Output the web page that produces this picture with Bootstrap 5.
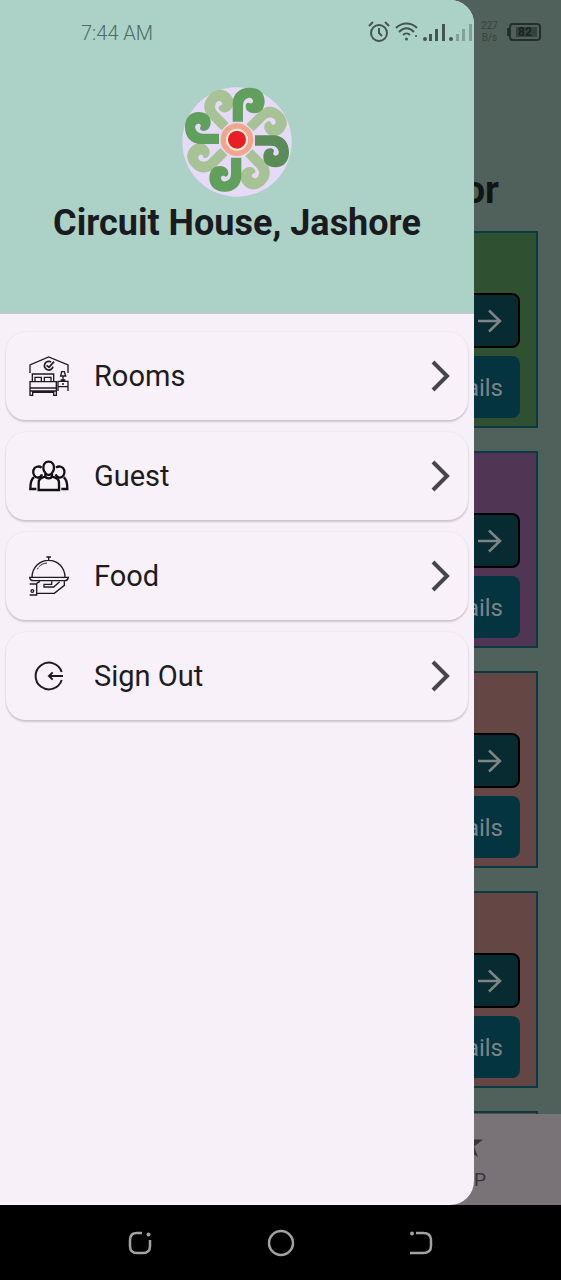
<!DOCTYPE html>
<html lang="en">
<head>
<meta charset="utf-8">
<meta name="viewport" content="width=device-width, initial-scale=1">
<title>Circuit House, Jashore</title>
<link href="https://cdn.jsdelivr.net/npm/bootstrap@5.3.0/dist/css/bootstrap.min.css" rel="stylesheet">
<style>
  body { font-family: Roboto, "Liberation Sans", sans-serif; background: #000; }
  svg { display: block; flex: none; }

  /* page under the open drawer */
  .app-page { background: #4f615a; }
  .floor-title { font-size: 38px; line-height: 44px; padding: 168px 62px 19px; color: #111614; }
  .floor-list { gap: 23px; padding: 0 23px; }
  .floor-box { border: 2px solid #0b3b42; padding: 60px 16px 8px; gap: 8px; flex: none; }
  .floor-green { background: #305032; }
  .floor-purple { background: #503555; }
  .floor-rose { background: #644744; }
  .btn-next { width: 112px; height: 55px; border: 2px solid #000; border-radius: 8px; background: #082b31; padding: 0 15px; }
  .btn-details { width: 112px; height: 62px; border: 0; border-radius: 8px; background: #03343f; color: #7c8388; font-size: 24px; padding: 2px 17px 0; }
  .tab-strip { background: #797276; height: 91px; flex: none; }
  .tab-strip a { width: 33.333%; color: #37343a; font-size: 19px; line-height: 24px; gap: 10px; padding-top: 14px; }

  /* drawer */
  .side-drawer { width: 84.5%; background: #f7f0f9; border-radius: 0 24px 24px 0; z-index: 2; }
  .drawer-head { background: #acd2c8; border-bottom: 1px solid #cac4cc; padding: 87px 16px 67px; }
  .drawer-head h1 { font-size: 36px; line-height: 46px; color: #1a1b20; padding-top: 3px; }
  .menu-list { padding: 18px 6px; gap: 12px; }
  .menu-row { height: 88px; padding: 0 17px 0 23px; gap: 25px; border-radius: 20px; background: #f8f1fa; color: #1d1b20; font-size: 29px; box-shadow: 0 2px 2px rgba(0,0,0,.17), 0 0 2px rgba(0,0,0,.08); }
  .menu-row span { padding-top: 2px; }

  /* system bars */
  .status-strip { height: 62px; padding: 1px 19px 0 81px; z-index: 3; color: rgba(0,0,0,.6); }
  .clock-text { font-size: 20px; color: #4d6c63; padding-top: 3px; }
  .net-speed { font-size: 10px; line-height: 12px; color: #37443f; width: 17px; }
  .key-strip { height: 75px; padding: 0 12.5%; background: #000; flex: none; }
  .key-strip button { flex: 1; }
</style>
</head>
<body>
<div class="vh-100 d-flex flex-column">
  <div class="position-relative flex-grow-1 overflow-hidden d-flex flex-column app-page">

    <main class="flex-grow-1 overflow-hidden d-flex flex-column">
      <h2 class="floor-title fw-bold text-end m-0">Floor</h2>
      <div class="floor-list d-flex flex-column">
        <section class="floor-box floor-green d-flex flex-column align-items-end">
          <button class="btn-next d-flex align-items-center justify-content-end" aria-label="Open"><svg width="26" height="26" viewBox="0 0 26 26" fill="none" stroke="#7d8587" stroke-width="2.5"><path d="M1 13H23M12 2.500L23 13L12 23.500"/></svg></button>
          <button class="btn-details text-end">Details</button>
        </section>
        <section class="floor-box floor-purple d-flex flex-column align-items-end">
          <button class="btn-next d-flex align-items-center justify-content-end" aria-label="Open"><svg width="26" height="26" viewBox="0 0 26 26" fill="none" stroke="#7d8587" stroke-width="2.5"><path d="M1 13H23M12 2.500L23 13L12 23.500"/></svg></button>
          <button class="btn-details text-end">Details</button>
        </section>
        <section class="floor-box floor-rose d-flex flex-column align-items-end">
          <button class="btn-next d-flex align-items-center justify-content-end" aria-label="Open"><svg width="26" height="26" viewBox="0 0 26 26" fill="none" stroke="#7d8587" stroke-width="2.5"><path d="M1 13H23M12 2.500L23 13L12 23.500"/></svg></button>
          <button class="btn-details text-end">Details</button>
        </section>
        <section class="floor-box floor-rose d-flex flex-column align-items-end">
          <button class="btn-next d-flex align-items-center justify-content-end" aria-label="Open"><svg width="26" height="26" viewBox="0 0 26 26" fill="none" stroke="#7d8587" stroke-width="2.5"><path d="M1 13H23M12 2.500L23 13L12 23.500"/></svg></button>
          <button class="btn-details text-end">Details</button>
        </section>
        <section class="floor-box floor-rose"></section>
      </div>
    </main>

    <nav class="tab-strip d-flex justify-content-end">
      <a href="#" class="d-flex flex-column align-items-center text-decoration-none">
        <svg width="30" height="30" viewBox="0 0 30 30" fill="#37343a"><path d="M15 1L18.500 11.500H30L21 18.500L25 29L15 23L5 29L9 18.500L0 11.500H11.500Z"/></svg>
        V.I.P
      </a>
    </nav>

    <aside class="side-drawer position-absolute top-0 start-0 h-100 overflow-hidden d-flex flex-column">
      <header class="drawer-head d-flex flex-column align-items-center">
        <svg width="110" height="110" viewBox="-165 -158 330 330" role="img" aria-label="Circuit House logo">
          <defs>
            <path id="petal" d="M-13-54V-108C-13-138 8-156 38-156C65-156 83-140 83-115C83-92 69-79 52-79C36-79 26-88 26-100C26-108 31-113 37-110C42-107 48-109 48-115C48-123 41-127 34-125C23-122 18-114 18-102V-54Z"/>
          </defs>
          <circle cx="0" cy="7" r="164" fill="#e6daf8"/>
          <g fill="#a7c295">
            <use href="#petal" transform="rotate(45) scale(.98)"/>
            <use href="#petal" transform="rotate(135) scale(.98)"/>
            <use href="#petal" transform="rotate(225) scale(.98)"/>
            <use href="#petal" transform="rotate(315) scale(.98)"/>
          </g>
          <g fill="#619f5d">
            <use href="#petal"/>
            <use href="#petal" transform="rotate(90)" fill="#5b8b56"/>
            <use href="#petal" transform="rotate(180)"/>
            <use href="#petal" transform="rotate(270)"/>
          </g>
          <circle r="49" fill="#f3a58c"/>
          <circle r="30" fill="#ea1f26" stroke="#fff0df" stroke-width="6"/>
        </svg>
        <h1 class="fw-bold m-0 text-nowrap">Circuit House, Jashore</h1>
      </header>

      <nav class="menu-list d-flex flex-column">
        <a href="#" class="menu-row d-flex align-items-center text-decoration-none">
          <svg width="40" height="40" viewBox="0 0 120 120" fill="none" stroke="#1d1b20" stroke-width="4">
            <path d="M3 51V27L59 3L117 27V51"/>
            <path d="M66 18A13 13 0 1 0 72 32M53 28L60 34L75 17" stroke-width="5"/>
            <path d="M10 77V54H74V77M18 77V64H37V77M46 77V64H66V77M3 118V77H82V118H74V109H11V118ZM3 96H82M3 105H82"/>
            <path d="M87 105V76H117V105M87 92H117M99 84H105M102 72V60M95 60L98 47H106L110 60ZM95 72H109"/>
          </svg>
          <span class="flex-grow-1">Rooms</span>
          <svg width="20" height="32" viewBox="0 0 20 32" fill="none" stroke="#48454c" stroke-width="4"><path d="M2 2L16 16L2 30"/></svg>
        </a>
        <a href="#" class="menu-row d-flex align-items-center text-decoration-none">
          <svg width="40" height="40" viewBox="0 0 120 120" fill="none" stroke="#111" stroke-width="7">
            <path d="M59 17C48 17 42 26 43 37C44 48 52 57 59 57S74 48 75 37C76 26 70 17 59 17Z"/>
            <path d="M29 102V80C29 69 35 66 49 61C51 69 67 69 69 61C83 66 90 69 90 80V102ZM49 62V54M69 62V54"/>
            <path d="M38 35C29 28 16 32 13 43C11 54 17 64 26 65C32 65 37 62 39 55M15 64C7 69 4 76 4 99H22"/>
            <path d="M81 35C90 28 103 32 106 43C108 54 102 64 93 65C87 65 82 62 80 55M104 64C112 69 115 76 115 99H97"/>
          </svg>
          <span class="flex-grow-1">Guest</span>
          <svg width="20" height="32" viewBox="0 0 20 32" fill="none" stroke="#48454c" stroke-width="4"><path d="M2 2L16 16L2 30"/></svg>
        </a>
        <a href="#" class="menu-row d-flex align-items-center text-decoration-none">
          <svg width="40" height="40" viewBox="0 0 120 120" fill="none" stroke="#1d1b20" stroke-width="4">
            <path d="M52 3H66M59 3V14M9 64C9 35 31 13 59 13S108 35 108 64M2 64H118C117 71 113 74 108 74H13C7 74 3 71 2 64Z"/>
            <path d="M25 40C29 30 40 22 54 21" stroke-width="3" stroke-dasharray="6 4 60"/>
            <path d="M2 84H23V117H2M23 82L33 76M23 112H76L106 88V76M68 76V85H45V93H74L92 77"/>
            <circle cx="10" cy="105" r="4"/>
          </svg>
          <span class="flex-grow-1">Food</span>
          <svg width="20" height="32" viewBox="0 0 20 32" fill="none" stroke="#48454c" stroke-width="4"><path d="M2 2L16 16L2 30"/></svg>
        </a>
        <a href="#" class="menu-row d-flex align-items-center text-decoration-none">
          <svg width="40" height="40" viewBox="0 0 120 120" fill="none" stroke="#1d1b20" stroke-width="6">
            <path d="M98 48A40 40 0 1 0 98 72M102 60H60M71 49L60 60L71 71"/>
          </svg>
          <span class="flex-grow-1">Sign Out</span>
          <svg width="20" height="32" viewBox="0 0 20 32" fill="none" stroke="#48454c" stroke-width="4"><path d="M2 2L16 16L2 30"/></svg>
        </a>
      </nav>
    </aside>

    <div class="status-strip position-absolute top-0 start-0 w-100 d-flex align-items-center">
      <span class="clock-text fw-light me-auto">7:44 AM</span>
      <svg class="me-1" width="24" height="24" viewBox="0 0 24 24" fill="none" stroke="currentColor" stroke-width="2"><circle cx="12" cy="13" r="8"/><path d="M12 8V13L15 16M2 6L6 2M22 6L18 2"/></svg>
      <svg class="me-1" width="24" height="24" viewBox="0 0 24 24" fill="none" stroke="currentColor" stroke-width="2"><path d="M1 8C7 2 16 2 22 8M4 12C9 7 14 7 19 12M8 15C10 13 13 13 15 15"/><circle cx="11.500" cy="19" r="1.500" fill="currentColor" stroke="none"/><circle cx="21" cy="16" r="1" fill="currentColor" stroke="none"/></svg>
      <svg width="50" height="20" viewBox="0 0 50 20" fill="currentColor"><circle cx="2" cy="17" r="2"/><path d="M6 12h3v7h-3zM12 7h3v12h-3zM19 2h3v17h-3z"/><circle cx="28" cy="17" r="2"/><path opacity=".4" d="M33 12h3v7h-3zM39 7h3v12h-3zM46 2h3v17h-3z"/></svg>
      <span class="net-speed text-center ms-2 me-2">227 B/s</span>
      <svg width="36" height="20" viewBox="0 0 36 20"><rect x="4" y="2" width="30" height="16" rx="3" fill="none" stroke="#242e2a" stroke-width="2"/><path d="M2 6V14" stroke="#242e2a" stroke-width="2"/><rect x="10" y="5" width="21" height="10" fill="#34413c"/><text x="19" y="14" font-size="12" font-weight="700" text-anchor="middle" fill="#1c2421">82</text></svg>
    </div>
  </div>

  <footer class="key-strip d-flex align-items-center">
    <button class="btn p-0 border-0 d-flex justify-content-center" aria-label="Recent apps"><svg width="26" height="26" viewBox="0 0 26 26" fill="none" stroke="#a2a2a2" stroke-width="2.5"><path d="M15 3H10Q3 3 3 10V16Q3 23 10 23H16Q23 23 23 16V10"/><circle cx="21.500" cy="4.500" r="2" fill="#a2a2a2" stroke="none"/></svg></button>
    <button class="btn p-0 border-0 d-flex justify-content-center" aria-label="Home"><svg width="28" height="28" viewBox="0 0 28 28" fill="none" stroke="#a2a2a2" stroke-width="2.5"><circle cx="14" cy="14" r="12"/></svg></button>
    <button class="btn p-0 border-0 d-flex justify-content-center" aria-label="Back"><svg width="24" height="26" viewBox="0 0 24 26" fill="none" stroke="#a2a2a2" stroke-width="2.5"><path d="M7 3H14Q22 3 22 10V16Q22 23 14 23H1"/><circle cx="3" cy="3.500" r="2" fill="#a2a2a2" stroke="none"/></svg></button>
  </footer>
</div>
<script src="https://cdn.jsdelivr.net/npm/bootstrap@5.3.0/dist/js/bootstrap.bundle.min.js"></script>
</body>
</html>
